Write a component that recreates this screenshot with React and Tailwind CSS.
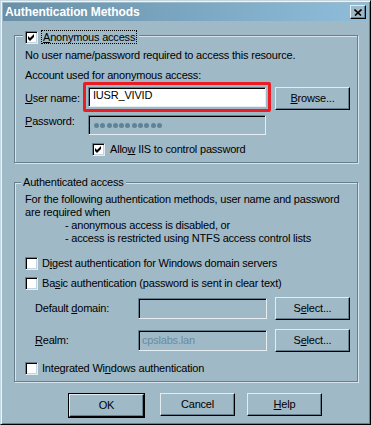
import React from "react";

function Check({ checked }) {
  return (
    <span className="w-[13px] h-[13px] shrink-0 bg-white border border-t-[#66808f] border-l-[#66808f] border-r-[#e4eef3] border-b-[#e4eef3] shadow-[inset_1px_1px_0_#000,inset_-1px_-1px_0_#c2d4de] flex items-center justify-center">
      {checked && (
        <svg width="9" height="9" viewBox="0 0 9 9" className="block">
          <polygon points="1,3 3,5 7,1 7,4 3,8 1,6" fill="#000" />
        </svg>
      )}
    </span>
  );
}

function Btn({ children, className = "" }) {
  return (
    <div
      className={
        "h-[23px] w-[75px] shrink-0 flex items-center justify-center bg-[#a0b9c7] border border-t-[#e2edf2] border-l-[#e2edf2] border-r-black border-b-black shadow-[inset_-1px_-1px_0_#66808f] " +
        className
      }
    >
      {children}
    </div>
  );
}

export default function App() {
  return (
    <div className="w-[371px] h-[425px] bg-[#a0b9c7] border border-t-[#c4d6e0] border-l-[#c4d6e0] border-r-black border-b-black shadow-[inset_1px_1px_0_#eef5f8,inset_-1px_-1px_0_#66808f] p-[2px] flex flex-col font-['Liberation_Sans',Arial,sans-serif] text-[11px] leading-[13px] tracking-[-0.2px] text-black overflow-hidden">
      {/* Title bar */}
      <div className="h-[18px] shrink-0 bg-linear-to-r from-[#6990a8] to-[#8ebddb] flex items-center justify-between pl-[2px] pr-[2px]">
        <span className="text-white font-bold text-[12px] tracking-[-0.1px]">Authentication Methods</span>
        <div className="w-[16px] h-[14px] bg-[#a0b9c7] border border-t-[#e2edf2] border-l-[#e2edf2] border-r-black border-b-black shadow-[inset_-1px_-1px_0_#66808f] flex items-center justify-center">
          <svg width="8" height="7" viewBox="0 0 8 7" className="block">
            <path d="M0.5 0.5 L7 6.5 M7.5 0.5 L1 6.5" stroke="#000" strokeWidth="1.6" fill="none" />
          </svg>
        </div>
      </div>

      {/* Group 1 */}
      <div className="mt-[14px] ml-[11px] w-[344px] border border-[#66808f] shadow-[1px_1px_0_#d6e5ed,inset_1px_1px_0_#d6e5ed] pl-[10px] pb-[6px] flex flex-col">
        <div className="-mt-[6px] -ml-[2px] px-[2px] self-start bg-[#a0b9c7] h-[14px] flex items-center">
          <Check checked />
          <span className="ml-[3px] border border-dotted border-black px-[1px] h-[14px] flex items-center">
            <u>A</u>nonymous access
          </span>
        </div>
        <div className="mt-[5px]">No user name/password required to access this resource.</div>
        <div className="mt-[7px]">Account used for anonymous access:</div>
        <div className="flex items-start">
          <div className="w-[58px] pt-[10px]">
            <u>U</u>ser name:
          </div>
          <div className="border-[3px] border-[#ec1c24] p-[2px] rounded-[2px]">
            <div className="w-[178px] h-[20px] bg-white border border-t-[#66808f] border-l-[#66808f] border-r-[#e4eef3] border-b-[#e4eef3] shadow-[inset_1px_1px_0_#000] pl-[4px] pt-[1px]">
              IUSR_VIVID
            </div>
          </div>
          <Btn className="ml-[4px] mt-[5px]">
            <span>
              <u>B</u>rowse...
            </span>
          </Btn>
        </div>
        <div className="mt-[3px] flex items-start">
          <div className="w-[63px]">
            <u>P</u>assword:
          </div>
          <div className="w-[178px] h-[20px] border border-t-[#66808f] border-l-[#66808f] border-r-[#e4eef3] border-b-[#e4eef3] shadow-[inset_1px_1px_0_#000] pl-[5px] flex items-center gap-[1.3px]">
            {Array.from({ length: 11 }).map((_, i) => (
              <span key={i} className="w-[5px] h-[5px] rounded-full bg-[#5f8397]" />
            ))}
          </div>
        </div>
        <div className="mt-[8px] ml-[67px] flex items-center gap-[5px] h-[13px]">
          <Check checked />
          <span>
            Allo<u>w</u> IIS to control password
          </span>
        </div>
      </div>

      {/* Group 2 */}
      <div className="mt-[19px] ml-[11px] w-[344px] border border-[#66808f] shadow-[1px_1px_0_#d6e5ed,inset_1px_1px_0_#d6e5ed] pl-[10px] pb-[6px] flex flex-col">
        <div className="-mt-[7px] -ml-[4px] px-[2px] self-start bg-[#a0b9c7]">Authenticated access</div>
        <div className="mt-[4px]">For the following authentication methods, user name and password</div>
        <div>are required when</div>
        <div className="pl-[40px]">- anonymous access is disabled, or</div>
        <div className="pl-[40px]">- access is restricted using NTFS access control lists</div>
        <div className="mt-[12px] flex items-center gap-[4px] h-[13px]">
          <Check />
          <span>
            D<u>i</u>gest authentication for Windows domain servers
          </span>
        </div>
        <div className="mt-[7px] flex items-center gap-[4px] h-[13px]">
          <Check />
          <span>
            Ba<u>s</u>ic authentication (password is sent in clear text)
          </span>
        </div>
        <div className="mt-[7px] flex items-center h-[23px]">
          <div className="w-[113px] pl-[10px]">
            Default <u>d</u>omain:
          </div>
          <div className="w-[129px] h-[21px] border border-t-[#66808f] border-l-[#66808f] border-r-[#e4eef3] border-b-[#e4eef3] shadow-[inset_1px_1px_0_#000]" />
          <Btn className="ml-[8px]">
            <span>
              S<u>e</u>lect...
            </span>
          </Btn>
        </div>
        <div className="mt-[9px] flex items-center h-[23px]">
          <div className="w-[113px] pl-[10px]">
            <u>R</u>ealm:
          </div>
          <div className="w-[129px] h-[21px] border border-t-[#66808f] border-l-[#66808f] border-r-[#e4eef3] border-b-[#e4eef3] shadow-[inset_1px_1px_0_#000] pl-[3px] flex items-center text-[#6a8ba0]">
            cpslabs.lan
          </div>
          <Btn className="ml-[8px]">
            <span>
              S<u>e</u>lect...
            </span>
          </Btn>
        </div>
        <div className="mt-[10px] flex items-center gap-[4px] h-[13px]">
          <Check />
          <span>
            Integrated Wi<u>n</u>dows authentication
          </span>
        </div>
      </div>

      {/* Buttons */}
      <div className="mt-[11px] flex">
        <div className="ml-[65px] border border-black">
          <Btn className="w-[73px] h-[21px]">OK</Btn>
        </div>
        <Btn className="ml-[15px]">Cancel</Btn>
        <Btn className="ml-[12px]">
          <span>
            <u>H</u>elp
          </span>
        </Btn>
      </div>
    </div>
  );
}
